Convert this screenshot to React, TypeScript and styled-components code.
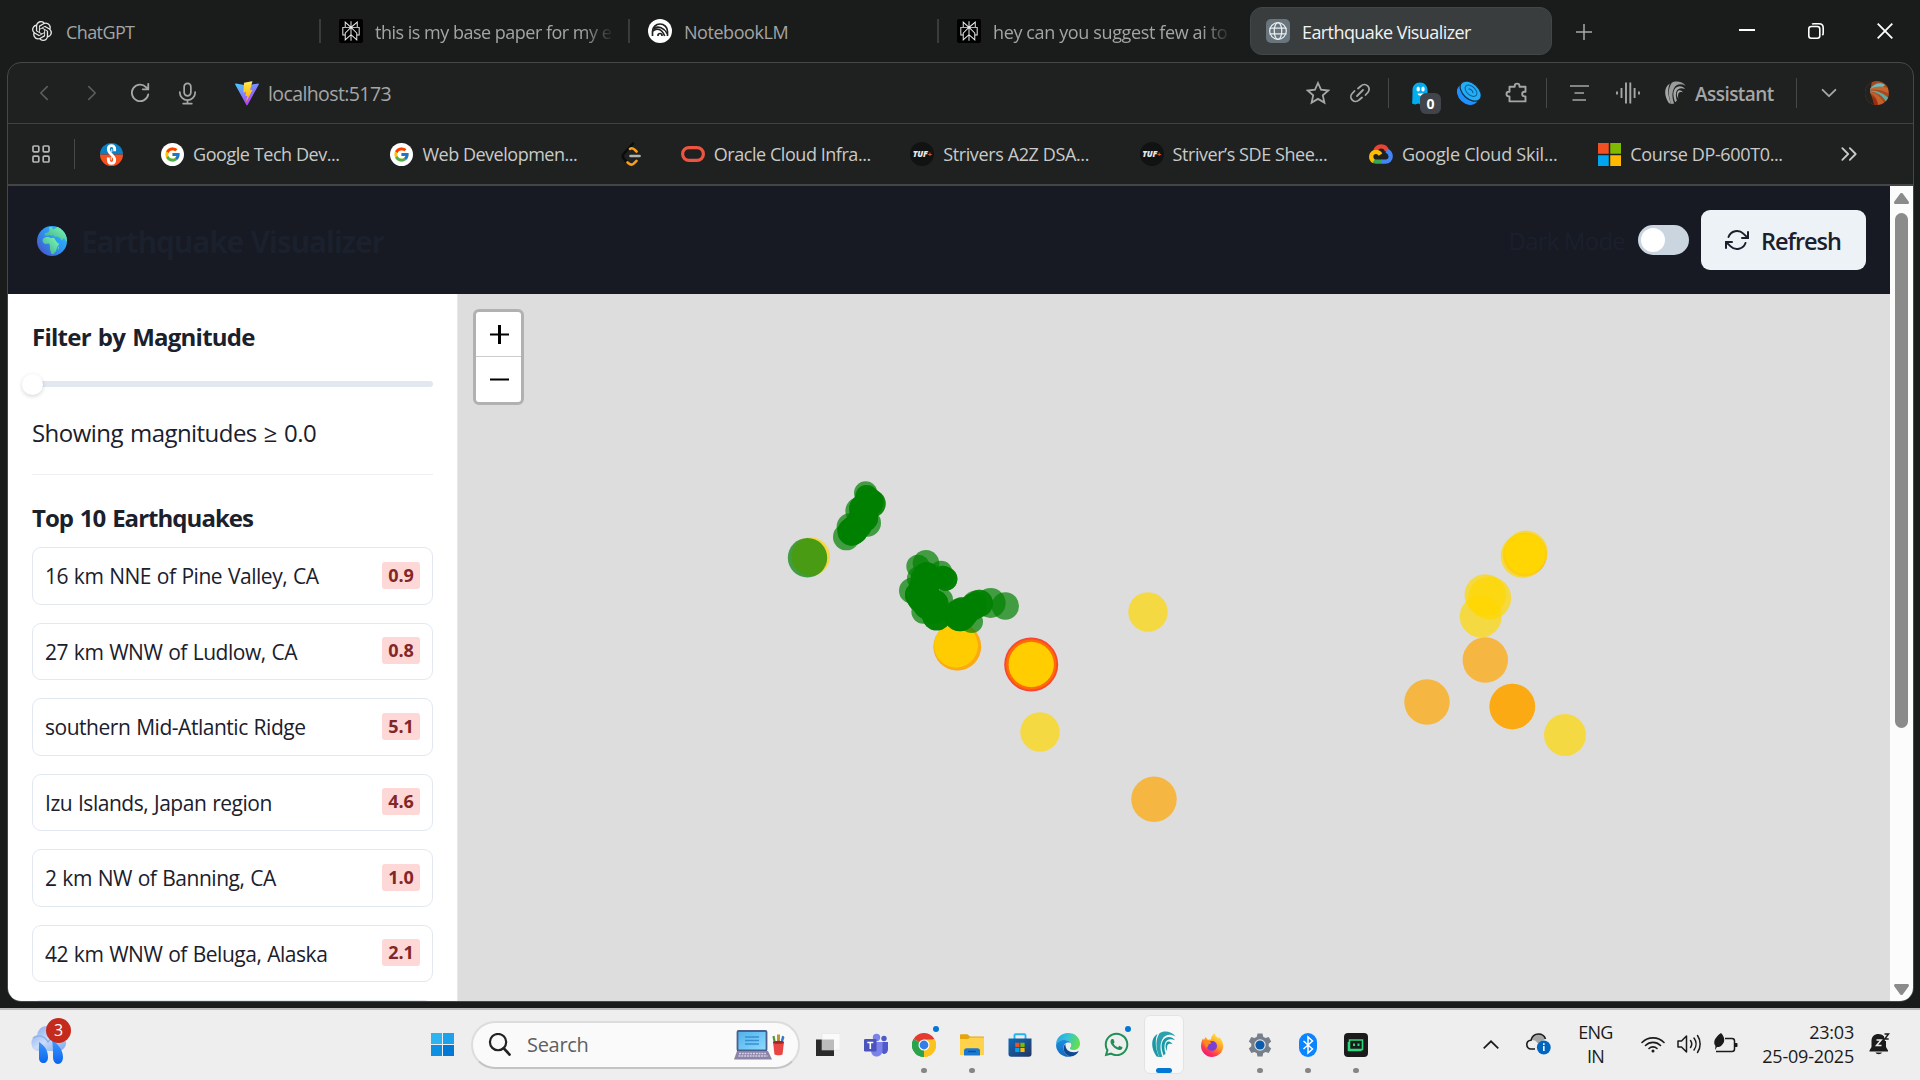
import React from 'react';
import styled, { createGlobalStyle, css } from 'styled-components';
import { FiRefreshCw } from 'react-icons/fi';
import { FcGoogle } from 'react-icons/fc';
import { FaWhatsapp } from 'react-icons/fa';
import { SiOpenai, SiPerplexity } from 'react-icons/si';

const Global = createGlobalStyle`
  *, *::before, *::after { box-sizing: border-box; }
  body { margin: 0; background: #1a1c1b; }
  svg { display: block; flex: none; }
`;

const Screen = styled.div`
  width: 1920px;
  height: 1080px;
  display: flex;
  flex-direction: column;
  overflow: hidden;
  background: #1a1c1b;
  font-family: 'Open Sans', 'Noto Sans', sans-serif;
  white-space: nowrap;
`;

/* ---------- Tab strip ---------- */

const TabStrip = styled.div`
  height: 62px;
  flex: none;
  display: flex;
  align-items: center;
  padding-left: 12px;
`;

const Tab = styled.div<{ $last?: boolean }>`
  width: 309px;
  height: 24px;
  flex: none;
  display: flex;
  align-items: center;
  gap: 12px;
  padding: 0 16px 0 18px;
  border-right: 2px solid ${p => (p.$last ? 'transparent' : '#3a3c3c')};
  color: #a3a4a4;
`;

const ActiveTab = styled.div`
  width: 302px;
  height: 48px;
  margin-left: 2px;
  display: flex;
  align-items: center;
  gap: 12px;
  padding: 0 15px;
  border-radius: 12px;
  border: 1px solid #434647;
  background: #3a3d3e;
  color: #f2f2f2;
`;

const TabTitle = styled.span<{ $fade?: boolean; $track?: number }>`
  flex: 1;
  min-width: 0;
  overflow: hidden;
  padding-top: 1px;
  font-size: 18px;
  line-height: 26px;
  letter-spacing: ${p => p.$track ?? -0.5}px;
  ${p => p.$fade && css`mask-image: linear-gradient(90deg, #000 88%, transparent 101%);`}
`;

const IconBox = styled.span<{ $bg?: string; $round?: string; $size?: number }>`
  width: ${p => p.$size ?? 24}px;
  height: ${p => p.$size ?? 24}px;
  flex: none;
  display: flex;
  align-items: center;
  justify-content: center;
  border-radius: ${p => p.$round ?? '0'};
  background: ${p => p.$bg ?? 'transparent'};
`;

const NewTab = styled.div`
  width: 64px;
  display: flex;
  justify-content: center;
  padding-top: 1px;
`;

const WindowControls = styled.div`
  margin-left: auto;
  display: flex;
`;

const WindowButton = styled.div`
  width: 69px;
  height: 62px;
  display: flex;
  align-items: center;
  justify-content: center;
  padding-right: 1px;
`;

/* ---------- Browser window ---------- */

const Window = styled.div`
  width: 1907px;
  height: 940px;
  flex: none;
  margin-left: 7px;
  display: flex;
  flex-direction: column;
  border: 1px solid #464848;
  border-radius: 14px;
  overflow: hidden;
  background: #1f2120;
`;

const Toolbar = styled.div`
  height: 61px;
  flex: none;
  display: flex;
  align-items: center;
  border-bottom: 1px solid #404242;
  color: #a5a6a6;
`;

const ToolSlot = styled.div<{ $w: number; $dim?: boolean }>`
  width: ${p => p.$w}px;
  flex: none;
  display: flex;
  align-items: center;
  justify-content: center;
  color: ${p => (p.$dim ? '#5c5e5e' : 'inherit')};
`;

const Address = styled.div`
  flex: 1;
  display: flex;
  align-items: center;
  gap: 9px;
  padding-left: 15px;
  font-size: 19.5px;
  line-height: 28px;
  letter-spacing: -0.6px;
  span { padding-top: 2px; }
`;

const Divider = styled.div<{ $h: number }>`
  width: 1px;
  height: ${p => p.$h}px;
  flex: none;
  background: #464848;
`;

const GhostWrap = styled.div`
  position: relative;
  width: 80px;
  height: 30px;
  flex: none;
`;

const GhostIcon = styled.div`
  position: absolute;
  left: 21px;
  top: 4px;
`;

const GhostBadge = styled.div`
  position: absolute;
  left: 31px;
  top: 15px;
  width: 21px;
  height: 21px;
  border-radius: 6px;
  background: #41444b;
  color: #fff;
  font-size: 14px;
  font-weight: 700;
  line-height: 22px;
  text-align: center;
`;

const Assistant = styled.div`
  width: 144px;
  display: flex;
  align-items: center;
  gap: 9px;
  padding-left: 13px;
  font-size: 19px;
  font-weight: 600;
  line-height: 28px;
  letter-spacing: -0.55px;
  span { padding-top: 2px; }
`;

const Bookmarks = styled.div`
  height: 62px;
  flex: none;
  display: flex;
  align-items: center;
  border-bottom: 2px solid #444646;
  color: #c9caca;
`;

const Bookmark = styled.div<{ $w?: number; $track?: number }>`
  width: ${p => p.$w ?? 229.4}px;
  flex: none;
  display: flex;
  align-items: center;
  gap: 9px;
  font-size: 18px;
  line-height: 26px;
  letter-spacing: ${p => p.$track ?? -0.44}px;
`;

const TufBadge = styled.span`
  width: 24px;
  height: 24px;
  border-radius: 50%;
  background: #111212;
  color: #e8e8e8;
  font: italic 800 8.5px/24px 'Open Sans', sans-serif;
  letter-spacing: -0.2px;
  text-align: center;
  i { color: #d0582c; font-style: normal; font-size: 7px; }
`;

/* ---------- Page ---------- */

const Page = styled.div`
  flex: 1;
  min-height: 0;
  display: flex;
`;

const AppArea = styled.div`
  flex: 1;
  display: flex;
  flex-direction: column;
`;

const Header = styled.header`
  height: 108px;
  flex: none;
  display: flex;
  align-items: center;
  padding: 0 24px 0 29px;
  background: #171923;
  color: #1a202c;
`;

const GlobeSlot = styled.span`
  padding-top: 2px;
`;

const Title = styled.h1`
  margin: 0 auto 0 14px;
  padding-top: 3px;
  font-size: 30px;
  line-height: 36px;
  font-weight: 700;
  letter-spacing: -1.24px;
  word-spacing: 1px;
`;

const ModeLabel = styled.span`
  padding-top: 2px;
  font-size: 24px;
  line-height: 36px;
  letter-spacing: -0.8px;
  margin-right: 13px;
`;

const Toggle = styled.span`
  width: 51px;
  height: 30px;
  padding: 3px;
  border-radius: 15px;
  background: #cbd5e0;
  &::before {
    content: '';
    display: block;
    width: 24px;
    height: 24px;
    border-radius: 50%;
    background: #fff;
  }
`;

const RefreshButton = styled.button`
  width: 165px;
  height: 60px;
  margin: 0 0 0 12px;
  padding: 0 0 0 24px;
  display: flex;
  align-items: center;
  gap: 12px;
  border: 0;
  border-radius: 9px;
  background: #edf2f7;
  color: #1a202c;
  font: 600 23.5px/36px 'Open Sans', sans-serif;
  letter-spacing: -1.05px;
  span { padding-top: 2px; }
`;

const Body = styled.div`
  flex: 1;
  min-height: 0;
  display: flex;
`;

const Sidebar = styled.aside`
  width: 450px;
  flex: none;
  padding: 25px 24px 0;
  border-right: 1px solid #e2e8f0;
  background: #fff;
  color: #1a202c;
  overflow: hidden;
`;

const Heading = styled.h2<{ $track: number }>`
  margin: 0;
  font-size: 24px;
  line-height: 36px;
  font-weight: 700;
  letter-spacing: ${p => p.$track}px;
  word-spacing: 1.5px;
`;

const Slider = styled.div`
  height: 20px;
  margin: 19px 0 21px;
  display: flex;
  align-items: center;
`;

const Thumb = styled.div`
  width: 21px;
  height: 21px;
  flex: none;
  margin: 0 -11px 0 -10px;
  border-radius: 50%;
  background: #fff;
  box-shadow: 0 1.5px 4px rgba(0, 0, 0, 0.16);
  z-index: 1;
`;

const Track = styled.div`
  flex: 1;
  height: 6px;
  border-radius: 3px;
  background: #e2e8f0;
`;

const Showing = styled.p`
  margin: 0 0 23px;
  font-size: 24px;
  line-height: 36px;
  letter-spacing: -0.55px;
  word-spacing: 1.4px;
`;

const Rule = styled.hr`
  margin: 0 0 25px;
  border: 0;
  height: 1px;
  background: #edf0f5;
`;

const QuakeList = styled.div`
  margin-top: 11px;
  display: flex;
  flex-direction: column;
  gap: 18px;
`;

const Quake = styled.div`
  height: 57.5px;
  flex: none;
  display: flex;
  align-items: center;
  justify-content: space-between;
  padding: 0 12px;
  border: 1px solid #e2e8f0;
  border-radius: 9px;
`;

const Place = styled.span`
  padding-top: 1px;
  font-size: 21px;
  line-height: 32px;
  letter-spacing: -0.47px;
  word-spacing: 0.8px;
`;

const Magnitude = styled.span`
  width: 38px;
  height: 27px;
  margin-bottom: 1px;
  border-radius: 3px;
  background: #fed7d7;
  color: #822727;
  font-size: 18px;
  line-height: 27px;
  font-weight: 700;
  text-align: center;
`;

const MapPane = styled.main`
  position: relative;
  flex: 1;
  background: #ddd;
`;

const ZoomControl = styled.div`
  position: absolute;
  left: 15px;
  top: 15px;
  width: 51px;
  border: 3px solid #b1b1b1;
  border-radius: 6px;
  background: #fff;
  overflow: hidden;
`;

const ZoomButton = styled.div<{ $line?: boolean }>`
  height: 45px;
  display: flex;
  align-items: center;
  justify-content: center;
  padding: 0 0 0 2px;
  border-bottom: ${p => (p.$line ? '1px solid #ccc' : '0')};
`;

const Scrollbar = styled.div`
  width: 23px;
  display: flex;
  flex-direction: column;
  align-items: center;
  justify-content: space-between;
  padding: 7px 0 6px;
  background: #fcfcfc;
`;

const ScrollThumb = styled.div`
  width: 13px;
  height: 515px;
  margin: 9px 0 auto;
  border-radius: 7px;
  background: #8b8b8b;
`;

/* ---------- Taskbar ---------- */

const Taskbar = styled.div`
  height: 72px;
  flex: none;
  margin-top: 6px;
  display: flex;
  align-items: center;
  border-top: 2px solid #bcbcbc;
  background: #eee;
  color: #1b1b1b;
`;

const Weather = styled.div`
  position: relative;
  width: 431px;
  height: 70px;
  flex: none;
  padding: 15px 0 0 29px;
`;

const WeatherBadge = styled.span`
  position: absolute;
  left: 46px;
  top: 8px;
  width: 25px;
  height: 25px;
  border-radius: 50%;
  background: #c42b1c;
  color: #fff;
  font-size: 16px;
  line-height: 24px;
  text-align: center;
`;

const SearchBox = styled.div`
  width: 329px;
  height: 48px;
  flex: none;
  margin: 0 4px 1px 17px;
  display: flex;
  align-items: center;
  padding: 0 13px 0 15px;
  border: 2px solid #dcdcdc;
  border-bottom-color: #c4c4c4;
  border-radius: 24px;
  background: #fafafa;
`;

const SearchText = styled.span`
  flex: 1;
  padding: 1px 0 0 16px;
  color: #5f5f5f;
  font-size: 20px;
  line-height: 28px;
  letter-spacing: -0.3px;
`;

const AppButton = styled.div<{ $active?: boolean }>`
  position: relative;
  width: 48px;
  height: 70px;
  flex: none;
  display: flex;
  align-items: center;
  justify-content: center;
  padding-bottom: 1px;
  ${p => p.$active && css`
    width: 40px;
    height: 59px;
    margin: 0 4px 2px;
    padding-bottom: 0;
    border: 1px solid #e3e3e3;
    border-radius: 6px;
    background: #f8f8f8;
  `}
`;

const RunMark = styled.span<{ $active?: boolean }>`
  position: absolute;
  bottom: ${p => (p.$active ? 0 : 7)}px;
  left: 50%;
  transform: translateX(-50%);
  width: ${p => (p.$active ? 16 : 6)}px;
  height: 5px;
  border-radius: 3px;
  background: ${p => (p.$active ? '#0078d4' : '#868686')};
`;

const AlertDot = styled.span`
  position: absolute;
  top: 16px;
  right: 9px;
  width: 6px;
  height: 6px;
  border-radius: 50%;
  background: #0078d4;
`;

const Tray = styled.div`
  margin-left: auto;
  display: flex;
  align-items: center;
  padding: 0 30px 2px 0;
`;

const TwoLine = styled.div<{ $w: number; $align: string; $track: number }>`
  width: ${p => p.$w}px;
  text-align: ${p => p.$align};
  font-size: 18px;
  line-height: 24px;
  letter-spacing: ${p => p.$track}px;
`;

const Raised = styled.span<{ $by: number }>`
  padding-bottom: ${p => p.$by}px;
`;

/* ---------- Icons ---------- */

type Stroke = { size?: number; w?: number; children: React.ReactNode; box?: string };
const Line = ({ size = 24, w = 1.6, children, box = '0 0 24 24' }: Stroke) => (
  <svg width={size} height={size} viewBox={box} fill="none" stroke="currentColor" strokeWidth={w} strokeLinecap="round" strokeLinejoin="round">{children}</svg>
);

const CometMark = ({ size = 24, color = 'currentColor' }: { size?: number; color?: string }) => (
  <svg width={size} height={size * 1.12} viewBox="0 0 24 27" fill={color}>
    <path d="M4.500 25.500C-1.500 17-1.500 7 5.500 2.800 3 8 2.800 17 7 26z" />
    <path d="M7.500 2.200C11.500-.5 19.500-.2 23.700 5.500c-5.500-3-11-2-13.500 3C7.700 13.500 8 20 10.500 25.800l-3.200.5C3.500 18 3.200 8.500 7.500 2.200z" fillOpacity="0.92" />
    <path d="M23 9.300c-4-2-8-1.300-9.600 2-1.500 3.200-1.200 7.200.2 11.200l-2 2C9 17.500 9 12.500 11.300 9 14 5 20 5 23 9.300z" />
    <path d="M20.500 13.200c-2.500-1-4.500-.5-5.200 1.500-.6 1.700-.4 3.500 0 5.800-2-3-2.300-6-1-8.400 1.300-2.200 4.500-2 6.200 1.100z" />
  </svg>
);

const ViteLogo = () => (
  <svg width="24" height="25" viewBox="0 0 24 25">
    <defs>
      <linearGradient id="va" x1="0" y1="0" x2="0.6" y2="1"><stop stopColor="#41d1ff" /><stop offset="1" stopColor="#bd34fe" /></linearGradient>
      <linearGradient id="vb" x1="0" y1="0" x2="0" y2="1"><stop stopColor="#ffea83" /><stop offset="0.2" stopColor="#ffdd35" /><stop offset="1" stopColor="#ffa800" /></linearGradient>
    </defs>
    <path d="M23.800 3.500 12.600 24a.7.7 0 0 1-1.200 0L.2 3.500c-.3-.6.1-1.100.7-1L12 4.500l11-2c.7-.1 1.100.4.8 1z" fill="url(#va)" />
    <path d="m17 .2-8 1.600-.6 9.400c0 .3.2.4.4.4l2.300-.5-.7 3.700 2 .1-1.300 5.300c0 .4.300.5.500.1L17.500 8.800l-2.600.4L17.400.6c.1-.3-.1-.4-.4-.4z" fill="url(#vb)" />
  </svg>
);

const SLogo = () => (
  <svg width="23" height="23" viewBox="0 0 24 24">
    <path d="M0 12a12 12 0 0 1 24 0z" fill="#0b7fc4" /><path d="M0 12a12 12 0 0 0 24 0z" fill="#f4511e" />
    <path d="M15.300 8.500V6c0-2-1.300-3.200-3.300-3.200S8.700 4 8.700 6.500c0 5 6.600 6 6.600 11 0 2.300-1.300 3.700-3.300 3.700s-3.300-1.400-3.300-3.700V15" fill="none" stroke="#fff" strokeWidth="3" />
    <path d="M12.300 6v3.500M11.700 14.500V18" stroke="#fff" strokeWidth="1" />
  </svg>
);

const NotebookMark = () => (
  <svg width="18" height="18" viewBox="0 0 18 18" fill="none" stroke="#222" strokeWidth="1.700">
    <path d="M1.500 14V9.500a7.500 7.500 0 0 1 15 0V14M7 14v-.5a2 2 0 0 1 4 0v.5" />
    <path d="M1.800 9c4-3.500 9-2 11.900 5M2.500 6.500c5-3 10.500-.5 13.700 5" />
  </svg>
);

const Leetcode = () => (
  <svg width="24" height="24" viewBox="0 0 24 24" fill="none" strokeWidth="2.600" strokeLinecap="round">
    <path d="M13 1.500 4 11.500c-1.500 1.700-1.500 4 0 5.500l3 3" stroke="#0b0b0b" />
    <path d="m7.500 20.300 1 1c1.700 1.500 4 1.500 5.500 0l2.500-2.500M10 6.800c1.500-1 3-.6 4.300.6l2.200 2.100" stroke="#f89f1b" />
    <path d="M10.500 14h9" stroke="#b3b3b3" />
  </svg>
);

const GoogleCloud = () => (
  <svg width="24" height="20" viewBox="0 0 24 20" fill="none" strokeWidth="4.300">
    <path d="M6 7.500C7 4 9.500 2.300 12.300 2.300c2.700 0 4.900 1.700 5.700 4.700" stroke="#ea4335" />
    <path d="M17.500 6.500c2.700 1.400 4.200 3.500 4.200 6 0 3-2.300 5.200-5.200 5.200H12" stroke="#4285f4" />
    <path d="M12.500 17.700H7c-1.300 0-2.300-.4-3.200-1.200" stroke="#34a853" />
    <path d="M4.600 17.200C3 16.200 2.200 14.600 2.200 12.800c0-2.800 2-4.900 4.800-4.900 2 0 3.500 1 4.500 2.700" stroke="#fbbc05" />
  </svg>
);

const Squares = ({ s, g, c }: { s: number; g: number; c: string[] }) => {
  const a = (s - g) / 2;
  return (
    <svg width={s} height={s}>
      <rect width={a} height={a} fill={c[0]} /><rect x={a + g} width={a} height={a} fill={c[1]} />
      <rect y={a + g} width={a} height={a} fill={c[2]} /><rect x={a + g} y={a + g} width={a} height={a} fill={c[3]} />
    </svg>
  );
};

const Ghost = () => (
  <svg width="19" height="24" viewBox="0 0 19 24">
    <path d="M2.500 8.500C2.500 3.500 5.500.5 10 .5s7.500 3 7.500 8V22c-1.500 0-2-1-3-1s-1.500 2-3.300 2c-1.500 0-1.700-1.500-2.900-1.500-1.300 0-1.800 1-3.300 1-1 0-1.500-1-3-1 .5-4 .5-8 .5-13z" fill="#00aef0" />
    <ellipse cx="8.200" cy="7" rx="1.700" ry="2.500" fill="#fff" /><ellipse cx="13" cy="7" rx="1.700" ry="2.500" fill="#fff" />
    <path d="M7.500 11.500c1 3 5 3 6.200 0" fill="#fff" />
  </svg>
);

const BlueShell = () => (
  <svg width="24" height="24" viewBox="0 0 24 24">
    <g transform="rotate(42 12 12)">
      <ellipse cx="12" cy="14" rx="12" ry="9" fill="#1e90ff" />
      <ellipse cx="12" cy="9.500" rx="12.300" ry="7.800" fill="#22adf6" stroke="#1b2b36" strokeWidth="1.200" />
      <ellipse cx="12" cy="9" rx="7" ry="4.300" fill="none" stroke="#0d5e94" strokeWidth="1" />
      <path d="M9 9.500c1-1.700 5-1.700 6 0" fill="none" stroke="#0d4d80" strokeWidth="1" />
    </g>
  </svg>
);

const Avatar = () => (
  <svg width="24" height="24" viewBox="0 0 24 24">
    <defs><clipPath id="av"><circle cx="12" cy="12" r="12" /></clipPath></defs>
    <g clipPath="url(#av)">
      <rect width="24" height="24" fill="#a8481f" />
      <path d="M0 0h7L5 11l5 13H0z" fill="#23221f" />
      <path d="M5 8C9 2 16 1 20 4l-4 4z" fill="#67c0c0" /><path d="M5 8c6-3 12-3 18-1v5c-5-3-11-4-18-3z" fill="#c8652c" />
      <path d="M5 9.500c8 0 14 3 19 8l-3 3C17 14 11 11 5 10.500z" fill="#63a9a2" /><path d="M5 11c7 1 11 5 14 11l-6 2c0-5-3-10-8-12z" fill="#c4602c" />
      <path d="M7 15c4 2 5 5 6 9H9z" fill="#9b2d0f" />
    </g>
  </svg>
);

const Globe = () => (
  <svg width="30" height="30" viewBox="0 0 30 30">
    <defs>
      <linearGradient id="ge" x1="0.9" y1="0.2" x2="0.1" y2="0.9"><stop stopColor="#2bb5ff" /><stop offset="0.5" stopColor="#2f8fee" /><stop offset="1" stopColor="#4757c8" /></linearGradient>
      <linearGradient id="gl" x1="1" y1="0" x2="0" y2="1"><stop stopColor="#7dffb5" /><stop offset="1" stopColor="#3fa489" /></linearGradient>
      <clipPath id="gc"><circle cx="15" cy="15" r="15" /></clipPath>
    </defs>
    <circle cx="15" cy="15" r="15" fill="url(#ge)" />
    <g clipPath="url(#gc)" fill="url(#gl)">
      <path d="M7.500 9.500 8 7l3-.5 1.500-2L12 1h3l1 2.500L19 2l2-2c5 1 9 6 10 11l-1 5-1.500-1.500-1.500-2.500-2 2.500-2-2.500-3-1.500-2.500.3-1.500-2-1.500 1.500-1.500-1.500-2 1z" />
      <path d="M5.500 14c1-2.500 3-3.300 6-3l2 1 3.500-.3 2 3.300 2 2.500h1.500l-2.500 4-1 3.500-2.500 3h-2l-1.500-4.500v-4l-1-2-4 .5-2-1.500z" />
      <path d="M20.500 22l1.500-1.500-.5 3-1 .5z" />
    </g>
  </svg>
);

const WeatherIcon = () => (
  <svg width="38" height="40" viewBox="0 0 38 40">
    <defs>
      <linearGradient id="wc" x1="0" y1="0" x2="1" y2="1"><stop stopColor="#7aa4ee" /><stop offset="0.500" stopColor="#cbdcf8" /><stop offset="1" stopColor="#7da5ea" /></linearGradient>
      <linearGradient id="wr" x1="0" y1="0" x2="0" y2="1"><stop stopColor="#3e9bff" /><stop offset="1" stopColor="#0a63ee" /></linearGradient>
    </defs>
    <path d="M9 26a8 8 0 0 1-1-15.500C9 4 13 1 18 1c7 0 11 4 11.500 9 4 1 7.500 3.500 7.500 8s-4 8-8 8z" fill="url(#wc)" />
    <path d="M4 13c5-4 12-2 15 4 2-3 6-4 10-3" fill="none" stroke="#8fb2ee" strokeWidth="1.500" />
    <path d="M10 17c5 3 9 8 9 15 0 4-2 6-4.500 6S10 36 10 33zM23 15c6 4 11 10 11 17 0 4-2 7-5 7s-5-3-5-7c0-6 0-12-1-17z" fill="url(#wr)" />
  </svg>
);

const Laptop = () => (
  <svg width="51" height="30" viewBox="0 0 51 30">
    <defs><linearGradient id="lp" x1="0" y1="0" x2="1" y2="1"><stop stopColor="#4fb0ea" /><stop offset="1" stopColor="#8edcff" /></linearGradient></defs>
    <rect x="3.500" y="1" width="29" height="19.500" rx="1" fill="url(#lp)" stroke="#4a5f8c" strokeWidth="1.800" />
    <path d="M11 7h14M11 10.500h14M11 14h14" stroke="#3a8fd2" strokeWidth="1.300" />
    <path d="M3 21h31l4 8.500H0z" fill="#8b83a8" /><path d="M5 23.500h27M4.500 26h29" stroke="#d5d2e2" strokeWidth="1.400" strokeDasharray="2 .8" />
    <path d="m41 14-1.500-8M47 14l2.500-7" stroke="#4a9a43" strokeWidth="2.200" /><path d="M44.500 13V4.500" stroke="#c4952c" strokeWidth="3" /><path d="m47.500 13 1.500-7" stroke="#377bc4" strokeWidth="2" />
    <path d="M39 12h11l-1.500 12.500c-1.500 1-6.500 1-8 0z" fill="#e84545" /><ellipse cx="44.500" cy="12.300" rx="5.500" ry="1.500" fill="#a32525" />
  </svg>
);

const TaskView = () => (
  <svg width="24" height="24" viewBox="0 0 24 24">
    <rect y="6.500" width="18" height="16.500" fill="#2a2a2a" /><rect x="6" y="0.500" width="18" height="16.500" fill="#fafafa" stroke="#e0e0e0" strokeWidth="0.500" /><rect x="6" y="6.500" width="12" height="10.500" fill="#bcbcbc" />
  </svg>
);

const Teams = () => (
  <svg width="24" height="24" viewBox="0 0 24 24">
    <circle cx="12.500" cy="4.500" r="3.700" fill="#7b83eb" /><circle cx="20" cy="5.500" r="2.700" fill="#5059c9" />
    <path d="M17 9h7v7c0 3-2 5-4.500 5L17 19z" fill="#5059c9" /><path d="M7 9h11.500v8c0 4-2.500 6.500-6 6.500S7 21 7 17z" fill="#7b83eb" />
    <rect y="6" width="12.500" height="12.500" rx="1.200" fill="#4b53bc" /><path d="M3.300 9.500h6M6.300 9.500V16" stroke="#fff" strokeWidth="1.600" />
  </svg>
);

const Chrome = () => (
  <svg width="24" height="24" viewBox="0 0 24 24">
    <path d="M12 12 1.600 6A12 12 0 0 1 22.400 6z" fill="#e33b2e" /><path d="M12 12 22.400 6A12 12 0 0 1 12 24z" fill="#fcc31e" /><path d="M12 12 12 24A12 12 0 0 1 1.600 6z" fill="#2ba24c" />
    <path d="M12 6.500h10.700A12 12 0 0 1 12 24l5-9.500z" fill="#fcc31e" /><path d="M1.600 6 7 15l5 3-0 6A12 12 0 0 1 1.600 6z" fill="#2ba24c" />
    <circle cx="12" cy="12" r="5.500" fill="#fff" /><circle cx="12" cy="12" r="4.400" fill="#357de8" />
  </svg>
);

const Folder = () => (
  <svg width="24" height="22" viewBox="0 0 24 22">
    <path d="M0 1.500C0 .7.500.2 1.300.2h6.200L10 2.500h13c.6 0 1 .4 1 1V8H0z" fill="#e5a50d" />
    <path d="M0 5h8l2-1.500h13c.6 0 1 .4 1 1V21H0z" fill="#ffd24c" />
    <path d="M4 21.500v-4.500c0-1.700 1-2.700 2.700-2.700h10.600c1.700 0 2.700 1 2.700 2.700v4.500z" fill="#1a78cf" /><path d="M8 17.500h8" stroke="#0b4f94" strokeWidth="1.300" />
  </svg>
);

const Store = () => (
  <svg width="24" height="24" viewBox="0 0 24 24">
    <defs><linearGradient id="st" x1="0" y1="0" x2="1" y2="1"><stop stopColor="#0b6cbd" /><stop offset="1" stopColor="#27345f" /></linearGradient></defs>
    <path d="M6.500 6V2.300c0-.7.400-1.100 1.100-1.100h8.800c.7 0 1.100.4 1.100 1.100V6" fill="none" stroke="#25b4ee" strokeWidth="1.900" />
    <path d="M.5 5.500h23V21c0 1.700-1 2.700-2.700 2.700H3.200C1.500 23.700.5 22.700.5 21z" fill="url(#st)" />
    <path d="M7.200 9.700h4.200v4.200H7.200z" fill="#f25022" /><path d="M12.400 9.700h4.200v4.200h-4.200z" fill="#7fba00" /><path d="M7.200 14.900h4.200v4.200H7.200z" fill="#00a4ef" /><path d="M12.400 14.900h4.200v4.200h-4.200z" fill="#ffb900" />
  </svg>
);

const Edge = () => (
  <svg width="24" height="24" viewBox="0 0 24 24">
    <defs>
      <linearGradient id="e1" x1="0" y1="0" x2="1" y2="0.300"><stop stopColor="#2a9fe0" /><stop offset="0.500" stopColor="#34c3d8" /><stop offset="1" stopColor="#63dd53" /></linearGradient>
      <linearGradient id="e2" x1="0" y1="0" x2="0" y2="1"><stop stopColor="#1b8fe0" /><stop offset="1" stopColor="#1368c0" /></linearGradient>
    </defs>
    <path d="M0 12C0 5 5 0 12 0c7.500 0 12 5 12 10.500 0 4-3 6.500-6.500 6.500-2.500 0-4-1-3.500-2s1.200-1.400 1.200-3C15 9 12 7 8.500 7 4 7 1 9.500 0 12z" fill="url(#e1)" />
    <path d="M0 12C1 9 4 7 8.500 7c3.500 0 5.500 1.500 6 3-4-1.500-7 1-7 5 0 5 4 8.500 8 8.300A12 12 0 0 1 0 12z" fill="url(#e2)" />
    <path d="M9.500 11c-4 3-1.500 11.500 5 12.500 4-.3 7-2.500 8.300-5.500-6 3-14 .5-13.300-7z" fill="#0c4a91" />
  </svg>
);

const Firefox = () => (
  <svg width="24" height="24" viewBox="0 0 24 24">
    <defs><linearGradient id="ff" x1="0.800" y1="0" x2="0.200" y2="1"><stop stopColor="#fff04f" /><stop offset="0.450" stopColor="#ff9a1f" /><stop offset="0.750" stopColor="#ff3750" /><stop offset="1" stopColor="#e5108c" /></linearGradient></defs>
    <path d="M1 13c0-3 1-6 2-7.500L4 7l1.500-3 2.500 3c1-.5 2-.5 3-.3C11 4 12.500 1.500 14.800 0c0 3 2 3.500 3.700 5.300l.5-1.300c3 2.500 4.200 6 4.200 9A11 11 0 0 1 12 24C6 24 1 19 1 13z" fill="url(#ff)" />
    <circle cx="12" cy="13" r="5" fill="#7a3fd6" /><path d="M3 8c4-1.500 7-.5 8.500 2.200-2.500.3-3.500 1.500-3.300 3L6 15z" fill="#ff8a1c" />
  </svg>
);

const Gear = () => (
  <svg width="24" height="24" viewBox="0 0 24 24">
    <path d="M9.500.5h5l.7 3.300 2.300 1.300 3.200-1 2.500 4.300-2.500 2.300v2.600l2.500 2.300-2.500 4.300-3.200-1-2.300 1.300-.7 3.300h-5l-.7-3.300-2.300-1.300-3.200 1-2.500-4.300 2.500-2.300v-2.600L.8 8.400l2.500-4.300 3.200 1 2.300-1.300z" fill="#77808a" />
    <circle cx="12" cy="12" r="5.700" fill="#e4e6e8" /><circle cx="12" cy="12" r="4.600" fill="#0b5cad" />
  </svg>
);

const Bluetooth = () => (
  <svg width="18" height="24" viewBox="0 0 18 24">
    <rect width="18" height="24" rx="9" fill="#0a84ff" />
    <path d="m4.500 8 9 8-4.500 4V4l4.500 4-9 8" fill="none" stroke="#fff" strokeWidth="1.500" />
  </svg>
);

const Terminal = () => (
  <svg width="24" height="24" viewBox="0 0 24 24">
    <rect width="24" height="24" rx="4" fill="#1b1b1b" />
    <path d="M5.500 7h13v9.500h-13zM4.500 9v8.500h13" fill="none" stroke="#2bd97b" strokeWidth="1.600" /><path d="M9 10.500h2v2.500H9zM13.500 10.500h2v2.500h-2z" fill="#2bd97b" />
  </svg>
);

const CloudInfo = () => (
  <svg width="25" height="22" viewBox="0 0 25 22">
    <path d="M6 7c3 0 4 1 6 3.500l7-4.500C18 3 15.500 1 12.500 1 9 1 6.500 3.500 6 7z" fill="#a5a5a5" />
    <path d="M9 16H5C2.500 16 .8 14 .8 11.500S2.500 7.500 5 7.300C6 3 9 1 12.500 1c3.500 0 6 2 7 5" fill="none" stroke="#1b1b1b" strokeWidth="1.600" />
    <circle cx="17.800" cy="14.500" r="6.900" fill="#0067c0" /><path d="M17.800 13v5M17.800 10.300v1.600" stroke="#fff" strokeWidth="1.600" />
  </svg>
);

const Battery = () => (
  <svg width="25" height="22" viewBox="0 0 25 22">
    <path d="M12 5.500h7c1.500 0 2.500 1 2.500 2.500v8c0 1.500-1 2.500-2.500 2.500H3" fill="none" stroke="#1b1b1b" strokeWidth="1.500" /><path d="M22 10h1.500c.7 0 1 .4 1 1v2c0 .6-.3 1-1 1H22z" fill="#1b1b1b" />
    <path d="M8 0c4 4 4.500 9 .5 12.500-1 1-2.500 1.500-4.500 1.500l-2 3 .5-4C0 9.500 1 5 8 0z" fill="#1b1b1b" />
  </svg>
);

const BellZ = () => (
  <svg width="21" height="24" viewBox="0 0 21 24">
    <path d="M2.500 9C2.500 4.500 5.500 2 9.500 2s7.500 3 7.500 7v6l2 3.500v1H.5v-1L2.500 15zM6.500 20.500h6.500c-.8 2.300-5.700 2.300-6.500 0z" fill="#1b1b1b" />
    <path d="M14 0h7v9h-5z" fill="#eee" /><path d="M15.500 2h4L15.700 7h4" fill="none" stroke="#1b1b1b" strokeWidth="1.500" /><path d="M7.500 8h4.700l-4.700 5.500h5" fill="none" stroke="#eee" strokeWidth="1.500" />
  </svg>
);

/* ---------- Data ---------- */

const quakes: [string, string][] = [
  ['16 km NNE of Pine Valley, CA', '0.9'],
  ['27 km WNW of Ludlow, CA', '0.8'],
  ['southern Mid-Atlantic Ridge', '5.1'],
  ['Izu Islands, Japan region', '4.6'],
  ['2 km NW of Banning, CA', '1.0'],
  ['42 km WNW of Beluga, Alaska', '2.1'],
];

type Dot = [number, number, number, string];
const ORANGE = '#ffa500';
const GOLD = '#ffd700';
const GREEN = '#008000';

/* Epicentres on the map canvas: x, y, radius, colour. */
const dots: Dot[] = [
  [1148, 612, 19.7, GOLD], [1040, 732, 19.7, GOLD], [1154, 799.3, 22.7, ORANGE],
  [1031.2, 664.5, 27, '#ff0000'], [1031.2, 664.5, 26, '#ff5a00'], [1031.2, 664.5, 25, '#ff7800'], [1031.2, 664.5, 22.7, GOLD], [1031.2, 664.5, 22.3, GOLD], [1031.2, 664.5, 22.3, '#ffcd00'],
  [957.3, 646.7, 23.8, ORANGE], [957.3, 646.7, 23.8, ORANGE], [956, 645.7, 21.8, GOLD], [956, 645.7, 21.8, '#ffcd00'],
  [810.7, 556.7, 19.3, GOLD], [807.5, 557.8, 19.7, GREEN],
  [1525, 554.500, 22, ORANGE], [1522.7, 556, 22, GOLD], [1526, 552.3, 21.7, GOLD], [1525.500, 553.500, 20, GOLD],
  [1485.3, 595, 20.8, GOLD], [1489.700, 598, 21.5, GOLD], [1480.700, 616.500, 21, GOLD],
  [1485.3, 660, 22.7, ORANGE], [1427, 702, 22.7, ORANGE], [1512.3, 706.5, 22.8, ORANGE], [1512.3, 706.5, 22.8, ORANGE], [1565, 735, 21, GOLD],
];

/* Dense swarms, in thirds of a pixel from (760, 460): x, y, radius, repeat count. */
const swarm: [number, number, number, number][] = [
  [317, 99, 35, 1], [320, 109, 34, 2], [335, 131, 42, 2], [328, 127, 42, 3], [297, 153, 41, 1], [310, 145, 42, 3], [310, 165, 42, 3],
  [322, 189, 41, 1], [315, 175, 39, 3], [269, 199, 39, 1], [295, 195, 41, 3], [282, 210, 42, 3], [275, 215, 42, 3], [259, 231, 40, 1],
  [498, 310, 40, 1], [474, 319, 35, 1], [543, 336, 34, 1], [557, 357, 35, 3], [548, 350, 33, 2], [478, 355, 37, 1], [500, 345, 38, 3], [490, 355, 38, 2],
  [456, 392, 39, 1], [475, 405, 40, 3], [492, 385, 45, 3], [490, 410, 50, 3], [505, 430, 48, 3], [547, 418, 32, 1], [490, 455, 36, 1],
  [520, 450, 42, 3], [530, 468, 43, 3], [525, 430, 40, 3], [600, 465, 49, 2], [605, 450, 38, 2], [600, 470, 43, 3], [615, 460, 40, 3],
  [635, 485, 34, 1], [645, 428, 36, 1], [658, 430, 41, 2], [640, 440, 40, 3], [692, 429, 45, 1], [736, 438, 41, 1],
];

const MapDots = () => (
  <svg width="1432" height="707" viewBox="458 294 1432 707">
    {dots.map(([x, y, r, c], i) => <circle key={i} cx={x} cy={y} r={r} fill={c} fillOpacity="0.7" />)}
    {swarm.flatMap(([x, y, r, n], i) => Array.from({ length: n }, (_, k) => (
      <circle key={`${i}-${k}`} cx={760 + x / 3} cy={460 + y / 3} r={r / 3} fill={GREEN} fillOpacity="0.7" />
    )))}
  </svg>
);

const Google = () => <IconBox $bg="#fff" $round="50%" $size={23}><FcGoogle size={17} /></IconBox>;
const Perplexity = () => <IconBox $bg="#000" $round="2px"><SiPerplexity size={20} color="#eee" /></IconBox>;

export default function App() {
  return (
    <Screen>
      <Global />
      <TabStrip>
        <Tab><IconBox><SiOpenai size={20} color="#e8e8e8" /></IconBox><TabTitle $track={-0.6}>ChatGPT</TabTitle></Tab>
        <Tab><Perplexity /><TabTitle $fade>this is my base paper for my e</TabTitle></Tab>
        <Tab><IconBox $bg="#fff" $round="50%"><NotebookMark /></IconBox><TabTitle $track={-0.45}>NotebookLM</TabTitle></Tab>
        <Tab $last><Perplexity /><TabTitle $fade $track={-0.37}>hey can you suggest few ai to</TabTitle></Tab>
        <ActiveTab>
          <IconBox $bg="#69757c" $round="5px">
            <Line size={20} w={1.5}><circle cx="12" cy="12" r="10" stroke="#e9eef0" /><ellipse cx="12" cy="12" rx="4.500" ry="10" stroke="#e9eef0" /><path d="M2.500 8.500h19M2.500 15.500h19" stroke="#e9eef0" /></Line>
          </IconBox>
          <TabTitle $track={-0.58}>Earthquake Visualizer</TabTitle>
        </ActiveTab>
        <NewTab><svg width="16" height="16" stroke="#a8a8a8" strokeWidth="1.500"><path d="M8 0v16M0 8h16" /></svg></NewTab>
        <WindowControls>
          <WindowButton><svg width="16" height="16"><path d="M0 7h16" stroke="#fff" strokeWidth="2" /></svg></WindowButton>
          <WindowButton><svg width="16" height="16" fill="none" stroke="#fff" strokeWidth="1.600"><rect x="0.800" y="3.500" width="11" height="11.700" rx="2.500" /><path d="M4 1.200C4.500.8 5 .8 6 .8h5c2.500 0 4.200 1.700 4.200 4.200v5c0 1-.2 1.700-.8 2.300" /></svg></WindowButton>
          <WindowButton><svg width="16" height="16" stroke="#fff" strokeWidth="1.800"><path d="M.7.7l14.600 14.600M15.300.7.7 15.300" /></svg></WindowButton>
        </WindowControls>
      </TabStrip>

      <Window>
        <Toolbar>
          <ToolSlot $w={24} />
          <ToolSlot $w={24} $dim><Line size={22} w={1.700}><path d="M15.500 5 8.500 12l7 7" /></Line></ToolSlot>
          <ToolSlot $w={24} />
          <ToolSlot $w={24} $dim><Line size={22} w={1.700}><path d="m8.500 5 7 7-7 7" /></Line></ToolSlot>
          <ToolSlot $w={24} />
          <ToolSlot $w={24}><Line size={22} w={2}><path d="M21 13.500A9 9 0 1 1 18.500 5.500L21 8M21 2v6h-6" strokeLinejoin="miter" /></Line></ToolSlot>
          <ToolSlot $w={23} />
          <ToolSlot $w={24}><Line size={23} w={1.800}><rect x="8.500" y="1.500" width="7" height="13" rx="3.500" /><path d="M4 10.500v.5a8 8 0 0 0 16 0v-.5M12 19v3.500M7.500 22.500h9" /></Line></ToolSlot>
          <ToolSlot $w={21} />
          <Address><ViteLogo /><span>localhost:5173</span></Address>
          <ToolSlot $w={42}><Line size={24} w={1.800}><path d="m12 2 3 6.700 7.300.8-5.500 4.900 1.600 7.200L12 17.900l-6.400 3.700 1.600-7.200L1.700 9.500 9 8.700z" strokeLinejoin="miter" /></Line></ToolSlot>
          <ToolSlot $w={42}><Line size={24} w={1.800}><path d="M10 7.500 13 5a4.600 4.600 0 0 1 6.800 6.500L17.500 14M14 16.500 11 19a4.600 4.600 0 0 1-6.800-6.500L6.500 10M9 15l6-6" /></Line></ToolSlot>
          <ToolSlot $w={7} />
          <Divider $h={30} />
          <GhostWrap><GhostIcon><Ghost /></GhostIcon><GhostBadge>0</GhostBadge></GhostWrap>
          <ToolSlot $w={0}><BlueShell /></ToolSlot>
          <ToolSlot $w={24} />
          <ToolSlot $w={48}><Line size={24} w={1.900}><path d="M4.500 6.800h5.200V6a2.400 2.400 0 0 1 4.800 0v.8h6v5h-1a2.300 2.300 0 0 0 0 4.600h1v5h-16v-5H3.800a2.300 2.300 0 0 1 0-4.600h.7z" transform="translate(0 -1)" /></Line></ToolSlot>
          <ToolSlot $w={5} />
          <Divider $h={30} />
          <ToolSlot $w={65}><svg width="19" height="16" stroke="currentColor" strokeWidth="1.700"><path d="M0 1h19M4.500 8h9.500M2.500 15h13.500" /></svg></ToolSlot>
          <ToolSlot $w={32}><Line size={24} w={1.900}><path d="M1 10.500v3M5.500 7v10M10 1.500v21M14.300 1.500v21M18.600 7v10M23 10.500v3" strokeLinecap="butt" /></Line></ToolSlot>
          <ToolSlot $w={8} />
          <Assistant><CometMark size={21} /><span>Assistant</span></Assistant>
          <Divider $h={30} />
          <ToolSlot $w={63}><Line size={22} w={2}><path d="m5 8.500 7 7 7-7" /></Line></ToolSlot>
          <ToolSlot $w={33}><Avatar /></ToolSlot>
          <ToolSlot $w={20} />
        </Toolbar>

        <Bookmarks>
          <ToolSlot $w={66}><svg width="18" height="18" fill="none" stroke="#b5b6b6" strokeWidth="1.700"><rect x="1" y="1" width="5.800" height="5.800" rx="1" /><rect x="11.200" y="1" width="5.800" height="5.800" rx="1" /><rect x="1" y="11.200" width="5.800" height="5.800" rx="1" /><rect x="11.200" y="11.200" width="5.800" height="5.800" rx="1" /></svg></ToolSlot>
          <Divider $h={30} />
          <ToolSlot $w={72}><SLogo /></ToolSlot>
          <ToolSlot $w={14} />
          <Bookmark><Google />Google Tech Dev...</Bookmark>
          <Bookmark $track={-0.48}><Google />Web Developmen...</Bookmark>
          <Bookmark $w={61}><Leetcode /></Bookmark>
          <Bookmark $track={-0.45}><svg width="24" height="16" fill="none" stroke="#ee5540" strokeWidth="3.200"><rect x="1.600" y="1.600" width="20.800" height="12.800" rx="6.400" /></svg>Oracle Cloud Infra...</Bookmark>
          <Bookmark $track={-0.38}><TufBadge>TUF<i>+</i></TufBadge>Strivers A2Z DSA...</Bookmark>
          <Bookmark><TufBadge>TUF<i>+</i></TufBadge>Striver’s SDE Shee...</Bookmark>
          <Bookmark $track={-0.22}><GoogleCloud />Google Cloud Skil...</Bookmark>
          <Bookmark $track={-0.36}><Squares s={23} g={1.500} c={['#f25022', '#7fba00', '#00a4ef', '#ffb900']} />Course DP-600T0...</Bookmark>
          <ToolSlot $w={43}><Line size={20} w={2.200}><path d="m4 5 7 7-7 7M13 5l7 7-7 7" /></Line></ToolSlot>
        </Bookmarks>

        <Page>
          <AppArea>
            <Header>
              <GlobeSlot><Globe /></GlobeSlot>
              <Title>Earthquake Visualizer</Title>
              <ModeLabel>Dark Mode</ModeLabel>
              <Toggle />
              <RefreshButton><FiRefreshCw size={24} /><span>Refresh</span></RefreshButton>
            </Header>
            <Body>
              <Sidebar>
                <Heading $track={-0.75}>Filter by Magnitude</Heading>
                <Slider><Thumb /><Track /></Slider>
                <Showing>Showing magnitudes ≥ 0.0</Showing>
                <Rule />
                <Heading $track={-0.96}>Top 10 Earthquakes</Heading>
                <QuakeList>
                  {quakes.map(([place, mag]) => <Quake key={place}><Place>{place}</Place><Magnitude>{mag}</Magnitude></Quake>)}
                  <Quake />
                </QuakeList>
              </Sidebar>
              <MapPane>
                <MapDots />
                <ZoomControl>
                  <ZoomButton $line><svg width="19" height="19" stroke="#000"><path d="M9.500 0v19" strokeWidth="3" /><path d="M0 9.500h19" strokeWidth="2" /></svg></ZoomButton>
                  <ZoomButton><svg width="19" height="3"><path d="M0 1.500h19" stroke="#000" strokeWidth="2" /></svg></ZoomButton>
                </ZoomControl>
              </MapPane>
            </Body>
          </AppArea>
          <Scrollbar>
            <svg width="15" height="11" fill="#8b8b8b"><path d="M7.500 0c.8 0 1.300.5 1.600 1l5.500 7.600c.8 1.200.2 2.400-1.200 2.400H1.600C.2 11-.4 9.800.4 8.600L5.900 1c.3-.5.800-1 1.600-1z" /></svg>
            <ScrollThumb />
            <svg width="15" height="11" fill="#8b8b8b"><path d="M7.500 11c-.8 0-1.300-.5-1.600-1L.4 2.400C-.4 1.200.2 0 1.600 0h11.800c1.400 0 2 1.200 1.200 2.400L9.100 10c-.3.500-.8 1-1.600 1z" /></svg>
          </Scrollbar>
        </Page>
      </Window>

      <Taskbar>
        <Weather><WeatherIcon /><WeatherBadge>3</WeatherBadge></Weather>
        <Raised $by={1}><Squares s={23} g={1} c={['#2fb4f2', '#1da1ea', '#0f8fe0', '#0078d4']} /></Raised>
        <SearchBox>
          <Line size={23} w={2.300}><circle cx="10.500" cy="9.500" r="8.500" stroke="#222" /><path d="m16.500 16 6 6.500" stroke="#222" strokeWidth="2.800" /></Line>
          <SearchText>Search</SearchText>
          <Laptop />
        </SearchBox>
        <AppButton><TaskView /></AppButton>
        <AppButton><Teams /></AppButton>
        <AppButton><Chrome /><AlertDot /><RunMark /></AppButton>
        <AppButton><Folder /><RunMark /></AppButton>
        <AppButton><Store /></AppButton>
        <AppButton><Edge /></AppButton>
        <AppButton><FaWhatsapp size={27} color="#1f8f55" /><AlertDot /></AppButton>
        <AppButton $active><CometMark size={24} color="#1899a8" /><RunMark $active /></AppButton>
        <AppButton><Firefox /></AppButton>
        <AppButton><Gear /><RunMark /></AppButton>
        <AppButton><Bluetooth /><RunMark /></AppButton>
        <AppButton><Terminal /><RunMark /></AppButton>
        <Tray>
          <ToolSlot $w={44}><svg width="16" height="9" fill="none" stroke="#1b1b1b" strokeWidth="1.700"><path d="m.7 8.300 7.300-7 7.300 7" /></svg></ToolSlot>
          <ToolSlot $w={51}><CloudInfo /></ToolSlot>
          <TwoLine $w={63} $align="center" $track={-0.7}>ENG<br />IN</TwoLine>
          <ToolSlot $w={51}><svg width="24" height="17" viewBox="0 0 24 17" fill="none" stroke="#1b1b1b" strokeWidth="1.600" strokeLinecap="round"><path d="M1 6.500a15.500 15.500 0 0 1 22 0M4.500 9.500a10.600 10.600 0 0 1 15 0M8 12.500a5.700 5.700 0 0 1 8 0" /><circle cx="12" cy="15" r="1.500" fill="#1b1b1b" stroke="none" /></svg></ToolSlot>
          <ToolSlot $w={22}><svg width="25" height="20" viewBox="0 0 25 20" fill="none" stroke="#1b1b1b" strokeWidth="1.500" strokeLinecap="round" strokeLinejoin="round"><path d="M1 7h3.500L9.500 2v16l-5-5H1zM13.500 6.500a6 6 0 0 1 0 7M17 4a10 10 0 0 1 0 12M20.500 1.500a15 15 0 0 1 0 17" /></svg></ToolSlot>
          <ToolSlot $w={13} />
          <ToolSlot $w={24}><Battery /></ToolSlot>
          <TwoLine $w={117} $align="right" $track={-0.22}>23:03<br />25-09-2025</TwoLine>
          <ToolSlot $w={15} />
          <BellZ />
        </Tray>
      </Taskbar>
    </Screen>
  );
}
